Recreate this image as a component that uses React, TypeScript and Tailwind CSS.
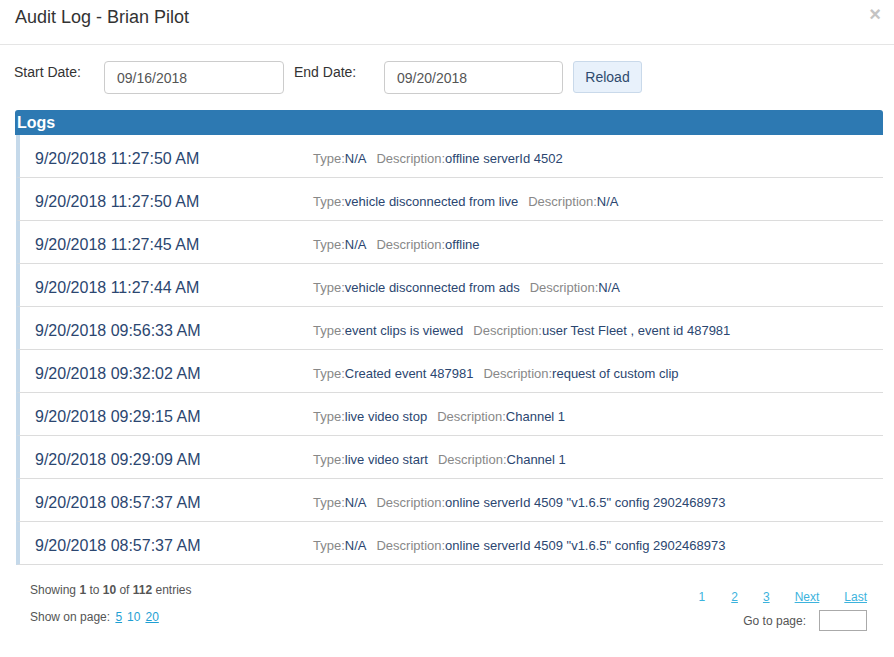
const logs = [
  { time: "9/20/2018 11:27:50 AM", type: "N/A", desc: "offline serverId 4502" },
  { time: "9/20/2018 11:27:50 AM", type: "vehicle disconnected from live", desc: "N/A" },
  { time: "9/20/2018 11:27:45 AM", type: "N/A", desc: "offline" },
  { time: "9/20/2018 11:27:44 AM", type: "vehicle disconnected from ads", desc: "N/A" },
  { time: "9/20/2018 09:56:33 AM", type: "event clips is viewed", desc: "user Test Fleet , event id 487981" },
  { time: "9/20/2018 09:32:02 AM", type: "Created event 487981", desc: "request of custom clip" },
  { time: "9/20/2018 09:29:15 AM", type: "live video stop", desc: "Channel 1" },
  { time: "9/20/2018 09:29:09 AM", type: "live video start", desc: "Channel 1" },
  { time: "9/20/2018 08:57:37 AM", type: "N/A", desc: 'online serverId 4509 "v1.6.5" config 2902468973' },
  { time: "9/20/2018 08:57:37 AM", type: "N/A", desc: 'online serverId 4509 "v1.6.5" config 2902468973' },
];

export default function App() {
  return (
    <div className="w-[894px] h-[657px] bg-white text-[#333] font-['Liberation_Sans',Arial,sans-serif] overflow-hidden">
      {/* header */}
      <div className="h-[45px] border-b border-[#e5e5e5] flex items-center justify-between pl-[15px] pr-[13px]">
        <h4 className="text-[18px] leading-none -mt-[10px]">Audit Log - Brian Pilot</h4>
        <span className="text-[20px] font-bold text-[#c4c4c4] leading-none -mt-[16px]">×</span>
      </div>

      {/* filters */}
      <div className="flex items-start pt-[16px] pl-[14px] text-[14px] h-[65px]">
        <label className="w-[90px] pt-[1px]">Start Date:</label>
        <div className="w-[180px] h-[33px] border border-[#ccc] rounded-[4px] flex items-center pl-[12px] pt-[2px] text-[#555]">09/16/2018</div>
        <label className="w-[90px] ml-[10px] pt-[1px]">End Date:</label>
        <div className="w-[179px] h-[33px] border border-[#ccc] rounded-[4px] flex items-center pl-[12px] pt-[2px] text-[#555]">09/20/2018</div>
        <button className="ml-[10px] w-[69px] h-[32px] rounded-[3px] border border-[#c9d9ea] bg-[#e8f1fb] text-[#2f4b6e] text-[14px]">Reload</button>
      </div>

      {/* logs panel */}
      <div className="ml-[15px] w-[868px]">
        <div className="h-[25px] bg-[#2d79b2] rounded-t-[3px] text-white font-bold text-[16px] flex items-center pl-[2px]">Logs</div>
        <div>
          {logs.map((l, i) => (
            <div key={i} className="h-[43px] ml-[1px] pt-[6px] border-l-[4px] border-l-[#c5d9ea] border-b border-b-[#dcdcdc] flex items-center">
              <div className="w-[293px] pl-[15px] text-[16px] text-[#2b4670]">{l.time}</div>
              <div className="text-[13px] text-[#2b4670]">
                <span className="text-[#888]">Type:</span>
                {l.type}
                <span className="text-[#888] ml-[10px]">Description:</span>
                {l.desc}
              </div>
            </div>
          ))}
        </div>
      </div>

      {/* footer */}
      <div className="flex justify-between pl-[30px] pr-[27px] pt-[16px] text-[12px] text-[#555]">
        <div>
          <div>
            Showing <b>1</b> to <b>10</b> of <b>112</b> entries
          </div>
          <div className="mt-[9px]">
            Show on page:{" "}
            <a className="text-[#1f9fd3] underline ml-[2px]">5</a>
            <span className="text-[#1f9fd3] ml-[5px]">10</span>
            <a className="text-[#1f9fd3] underline ml-[5px]">20</a>
          </div>
        </div>
        <div className="flex flex-col items-end">
          <div className="flex gap-[20px] text-[#3cb3dd] mt-[7px]">
            <span className="mr-[6px]">1</span>
            <a className="underline mr-[5px]">2</a>
            <a className="underline mr-[5px]">3</a>
            <a className="underline mr-[5px]">Next</a>
            <a className="underline">Last</a>
          </div>
          <div className="flex items-center mt-[4px]">
            <span>Go to page:</span>
            <div className="ml-[13px] w-[48px] h-[21px] border border-[#aaa]"></div>
          </div>
        </div>
      </div>
    </div>
  );
}
